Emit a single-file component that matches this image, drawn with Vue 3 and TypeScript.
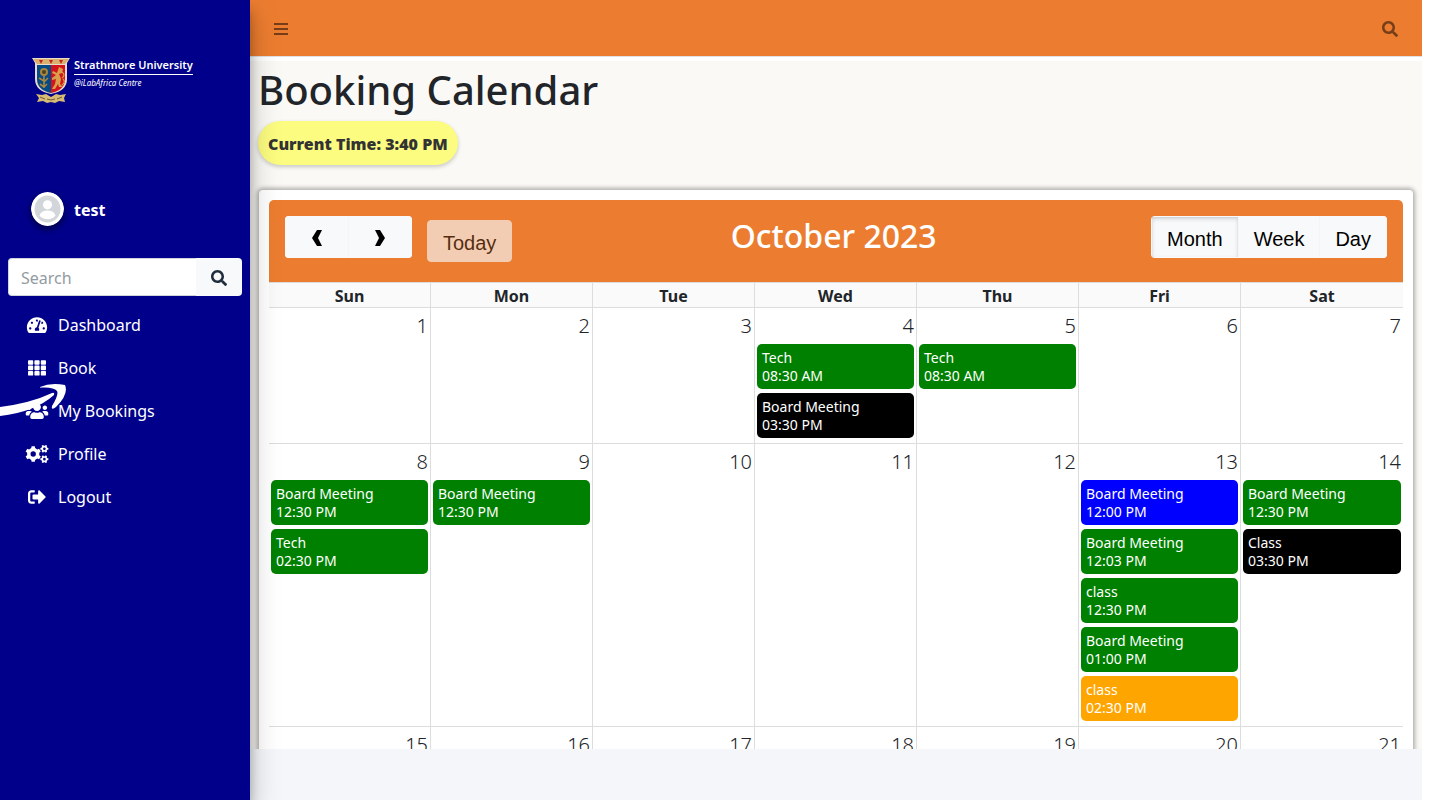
<script setup lang="ts">
import { ref } from 'vue'

interface BookingEvent {
  title: string
  time: string
  color: 'green' | 'black' | 'blue' | 'orange'
}

interface Day {
  date: number
  events: BookingEvent[]
}

interface MenuItem {
  label: string
  viewBox: string
  path: string
}

function gear(cx: number, cy: number, outer: number, inner: number, hole: number, teeth: number, turn: number): string {
  const step = (Math.PI * 2) / teeth
  const points: string[] = []
  for (let i = 0; i < teeth; i++) {
    const mid = i * step + turn
    const corners: [number, number][] = [
      [-0.3, inner],
      [-0.2, outer],
      [0.2, outer],
      [0.3, inner],
    ]
    for (const [offset, radius] of corners) {
      const angle = mid + offset * step
      points.push(`${(cx + Math.cos(angle) * radius).toFixed(1)} ${(cy + Math.sin(angle) * radius).toFixed(1)}`)
    }
  }
  return `M${points.join('L')}ZM${cx - hole} ${cy}a${hole} ${hole} 0 1 0 ${hole * 2} 0a${hole} ${hole} 0 1 0 ${-hole * 2} 0Z`
}

function gridPath(): string {
  let d = ''
  for (const y of [32, 187, 342]) {
    for (const x of [0, 182, 364]) {
      d += `M${x + 24} ${y}h100q24 0 24 24v82q0 24-24 24h-100q-24 0-24-24v-82q0-24 24-24z`
    }
  }
  return d
}

const searchPath =
  'M505 442.7L405.3 343c-4.5-4.5-10.6-7-17-7H372c27.6-35.3 44-79.7 44-128C416 93.1 322.9 0 208 0S0 93.1 0 208s93.1 208 208 208c48.3 0 92.7-16.4 128-44v16.3c0 6.4 2.5 12.5 7 17l99.7 99.7c9.4 9.4 24.6 9.4 33.9 0l28.3-28.3c9.4-9.4 9.4-24.6.1-34zM208 336c-70.7 0-128-57.2-128-128 0-70.7 57.2-128 128-128 70.7 0 128 57.2 128 128 0 70.7-57.2 128-128 128z'

const menu: MenuItem[] = [
  {
    label: 'Dashboard',
    viewBox: '0 0 576 512',
    path: 'M288 32C128.94 32 0 160.94 0 320c0 52.8 14.25 102.26 39.06 144.8 5.61 9.62 16.3 15.2 27.44 15.2h443c11.14 0 21.83-5.58 27.44-15.2C561.75 422.26 576 372.8 576 320c0-159.06-128.94-288-288-288zm0 64c14.71 0 26.58 10.13 30.32 23.65-1.11 2.26-2.64 4.23-3.45 6.67l-9.22 27.67c-5.13 3.49-10.97 6.01-17.64 6.01-17.67 0-32-14.33-32-32S270.33 96 288 96zM96 384c-17.67 0-32-14.33-32-32s14.33-32 32-32 32 14.33 32 32-14.33 32-32 32zm48-160c-17.67 0-32-14.33-32-32s14.33-32 32-32 32 14.33 32 32-14.33 32-32 32zm246.77-72.41l-61.33 184C343.13 347.33 352 364.54 352 384c0 11.72-3.38 22.55-8.88 32H232.88c-5.5-9.45-8.88-20.28-8.88-32 0-33.94 26.5-61.43 59.9-63.59l61.34-184.01c4.17-12.56 17.73-19.45 30.36-15.17 12.57 4.19 19.35 17.79 15.17 30.36zm14.66 57.2l15.52-46.55c3.47-1.29 7.13-2.23 11.05-2.23 17.67 0 32 14.33 32 32s-14.33 32-32 32c-11.38-.01-20.89-6.28-26.57-15.22zM480 384c-17.67 0-32-14.33-32-32s14.33-32 32-32 32 14.33 32 32-14.33 32-32 32z',
  },
  { label: 'Book', viewBox: '0 0 512 512', path: gridPath() },
  {
    label: 'My Bookings',
    viewBox: '0 0 640 512',
    path: 'M96 224c35.3 0 64-28.7 64-64s-28.7-64-64-64-64 28.7-64 64 28.7 64 64 64zm448 0c35.3 0 64-28.7 64-64s-28.7-64-64-64-64 28.7-64 64 28.7 64 64 64zm32 32h-64c-17.6 0-33.5 7.1-45.1 18.6 40.3 22.1 68.9 62 75.1 109.4h66c17.7 0 32-14.3 32-32v-32c0-35.3-28.7-64-64-64zm-256 0c61.9 0 112-50.1 112-112S381.9 32 320 32 208 82.1 208 144s50.1 112 112 112zm76.8 32h-8.3c-20.8 10-43.9 16-68.5 16s-47.6-6-68.5-16h-8.3C179.6 288 128 339.6 128 403.2V432c0 26.5 21.5 48 48 48h288c26.5 0 48-21.5 48-48v-28.8c0-63.6-51.6-115.2-115.2-115.2zm-223.7-13.4C161.5 263.1 145.6 256 128 256H64c-35.3 0-64 28.7-64 64v32c0 17.7 14.3 32 32 32h65.9c6.3-47.4 34.9-87.3 75.2-109.4z',
  },
  {
    label: 'Profile',
    viewBox: '0 0 640 512',
    path:
      gear(212, 256, 226, 176, 76, 6, Math.PI / 6 + Math.PI / 3) +
      gear(530, 108, 116, 88, 38, 6, 0) +
      gear(530, 404, 116, 88, 38, 6, 0),
  },
  {
    label: 'Logout',
    viewBox: '0 0 512 512',
    path: 'M497 273L329 441c-15 15-41 4.5-41-17v-96H152c-13.3 0-24-10.7-24-24v-96c0-13.3 10.7-24 24-24h136V88c0-21.4 25.9-32 41-17l168 168c9.3 9.4 9.3 24.6 0 34zM192 436v-40c0-6.6-5.4-12-12-12H96c-17.7 0-32-14.3-32-32V160c0-17.7 14.3-32 32-32h84c6.6 0 12-5.4 12-12V76c0-6.6-5.4-12-12-12H96c-53 0-96 43-96 96v192c0 53 43 96 96 96h84c6.6 0 12-5.4 12-12z',
  },
]

const dayNames = ['Sun', 'Mon', 'Tue', 'Wed', 'Thu', 'Fri', 'Sat']

const bookings: Record<number, BookingEvent[]> = {
  4: [
    { title: 'Tech', time: '08:30 AM', color: 'green' },
    { title: 'Board Meeting', time: '03:30 PM', color: 'black' },
  ],
  5: [{ title: 'Tech', time: '08:30 AM', color: 'green' }],
  8: [
    { title: 'Board Meeting', time: '12:30 PM', color: 'green' },
    { title: 'Tech', time: '02:30 PM', color: 'green' },
  ],
  9: [{ title: 'Board Meeting', time: '12:30 PM', color: 'green' }],
  13: [
    { title: 'Board Meeting', time: '12:00 PM', color: 'blue' },
    { title: 'Board Meeting', time: '12:03 PM', color: 'green' },
    { title: 'class', time: '12:30 PM', color: 'green' },
    { title: 'Board Meeting', time: '01:00 PM', color: 'green' },
    { title: 'class', time: '02:30 PM', color: 'orange' },
  ],
  14: [
    { title: 'Board Meeting', time: '12:30 PM', color: 'green' },
    { title: 'Class', time: '03:30 PM', color: 'black' },
  ],
}

const weeks: Day[][] = [0, 1, 2].map((week) =>
  dayNames.map((_, i) => {
    const date = week * 7 + i + 1
    return { date, events: bookings[date] ?? [] }
  }),
)

const views = ['Month', 'Week', 'Day'] as const
const activeView = ref<(typeof views)[number]>('Month')
const query = ref('')
</script>

<template>
  <div class="app">
    <aside class="sidebar">
      <a href="#" class="brand">
        <svg class="crest" viewBox="0 0 38 46" aria-hidden="true">
          <path d="M0 0h38l-3 5v16q0 12-16 15Q3 33 3 21V5z" fill="#e8dcc8" />
          <path d="M1 1h36l-4 5H5z" fill="#d8b070" />
          <path d="M7 2h4l-2 4zM17 2h4l-2 4zM27 2h4l-2 4z" fill="#c62020" />
          <path d="M5 7h14v28Q5 32 5 21z" fill="#064a86" />
          <path d="M19 7h14v14q0 11-14 14z" fill="#d3141c" />
          <circle cx="12" cy="14" r="4" fill="#a8863e" />
          <circle cx="12" cy="14" r="2" fill="#4d4020" />
          <path d="M12 18v12M12 23l-5-3M12 24l4-4M12 29l-4-3M12 29l3-3" stroke="#a8863e" stroke-width="1.6" fill="none" />
          <path d="M27 9l4 2-1 4-3 1 2 5-1 5 3 3h-4l-1-3-3 5h-3l3-5 1-5-4 1v-2l4-3-4-2 1-2 4 2z" fill="#d9a04c" />
          <path d="M30 20q4-3 0-6M30 27q4-3 1-6" stroke="#d9a04c" stroke-width="1.2" fill="none" />
          <path d="M4 36l6 1 4-1 5 3 5-3 4 1 6-1-2 4 1 4-6-1-4 2-4-1-4 1-4-2-6 1 2-4z" fill="#d7bb75" />
          <path d="M8 39l5 2M15 41l4 1 4-1M25 41l5-2" stroke="#70592c" stroke-width="1" fill="none" />
        </svg>
        <span class="brand-text">
          <span class="brand-name">Strathmore University</span>
          <span class="brand-sub">@iLabAfrica Centre</span>
        </span>
      </a>

      <a href="#" class="user">
        <svg class="avatar" viewBox="0 0 33 34" aria-hidden="true">
          <ellipse cx="16.5" cy="17" rx="16.5" ry="17" fill="#fff" />
          <ellipse cx="16.5" cy="17" rx="13" ry="13.5" fill="#d2d6da" />
          <circle cx="16.5" cy="12.8" r="4.6" fill="#fff" />
          <path d="M8.500 23.500q1.500-5 8-5t8 5q-3 3.800-8 3.800t-8-3.800z" fill="#fff" />
        </svg>
        <span>test</span>
      </a>

      <form class="search" @submit.prevent>
        <input v-model="query" type="search" placeholder="Search" aria-label="Search" />
        <button type="submit" aria-label="Submit search">
          <svg viewBox="0 0 512 512" width="16" height="16"><path :d="searchPath" fill="currentColor" /></svg>
        </button>
      </form>

      <nav class="menu">
        <a v-for="item in menu" :key="item.label" href="#">
          <svg :viewBox="item.viewBox" aria-hidden="true">
            <path :d="item.path" fill="currentColor" fill-rule="evenodd" />
          </svg>
          <span>{{ item.label }}</span>
        </a>
      </nav>

      <svg class="swoosh" viewBox="0 0 67 34" aria-hidden="true">
        <path d="M0 24Q31 20 52 10Q55 9 54 12Q35 29 0 33z" fill="#fff" />
        <path d="M40 4Q51-1 65 2Q69 11 56 24Q51 28 52 23Q59 12 57 8Q54 4 42 4.500Q40 5 40 4z" fill="#fff" />
      </svg>
    </aside>

    <div class="main">
      <header class="navbar">
        <button type="button" aria-label="Toggle menu">
          <svg viewBox="0 0 14 12" width="14" height="12">
            <path d="M0 0h14v2H0zM0 5h14v2H0zM0 10h14v2H0z" fill="currentColor" />
          </svg>
        </button>
        <button type="button" aria-label="Open search">
          <svg viewBox="0 0 512 512" width="16" height="16"><path :d="searchPath" fill="currentColor" /></svg>
        </button>
      </header>

      <main class="content">
        <h1>Booking Calendar</h1>
        <div class="clock">Current Time: 3:40 PM</div>

        <section class="card">
          <div class="toolbar">
            <div class="toolbar-left">
              <div class="group">
                <button type="button" class="btn arrow" aria-label="Previous month">
                  <svg viewBox="0 0 10 16" width="10" height="16"><path d="M5 0h5L6 8l4 8H5L0 8z" fill="currentColor" /></svg>
                </button>
                <button type="button" class="btn arrow" aria-label="Next month">
                  <svg viewBox="0 0 10 16" width="10" height="16"><path d="M0 0h5l5 8-5 8H0l4-8z" fill="currentColor" /></svg>
                </button>
              </div>
              <button type="button" class="btn today" disabled>Today</button>
            </div>
            <h2>October 2023</h2>
            <div class="group">
              <button
                v-for="view in views"
                :key="view"
                type="button"
                class="btn"
                :class="{ active: view === activeView }"
                @click="activeView = view"
              >
                {{ view }}
              </button>
            </div>
          </div>

          <table class="calendar">
            <thead>
              <tr>
                <th v-for="name in dayNames" :key="name" scope="col">{{ name }}</th>
              </tr>
            </thead>
            <tbody>
              <tr v-for="(week, w) in weeks" :key="w">
                <td v-for="day in week" :key="day.date">
                  <div class="date">{{ day.date }}</div>
                  <div v-for="(event, e) in day.events" :key="e" class="event" :class="event.color">
                    <div>{{ event.title }}</div>
                    <div>{{ event.time }}</div>
                  </div>
                </td>
              </tr>
            </tbody>
          </table>
        </section>
      </main>
      <footer class="footer"></footer>
    </div>
  </div>
</template>

<style>
body {
  background: #fff;
}
</style>

<style scoped>
.app,
.app * {
  box-sizing: border-box;
}

.app {
  display: flex;
  height: 100vh;
  padding-right: 16px;
  overflow: hidden;
  font-family: "Noto Sans", sans-serif;
  font-size: 16px;
  line-height: 24px;
  color: #212529;
}

.app a {
  color: #fff;
  text-decoration: none;
}

.sidebar {
  position: relative;
  z-index: 2;
  flex: 0 0 250px;
  min-width: 0;
  padding: 58px 8px 0;
  background: #00008b;
  box-shadow: 0 14px 28px rgba(0, 0, 0, 0.25), 0 10px 10px rgba(0, 0, 0, 0.22);
}

.brand {
  display: flex;
  gap: 4px;
  padding-left: 24px;
}

.crest {
  width: 38px;
  height: 46px;
}

.brand-text {
  display: flex;
  flex-direction: column;
}

.brand-name {
  height: 17px;
  border-bottom: 1px solid #fff;
  font-size: 11px;
  font-weight: 600;
  line-height: 14px;
  white-space: nowrap;
}

.brand-sub {
  font-size: 8px;
  font-style: italic;
  line-height: 16px;
}

.user {
  display: flex;
  align-items: center;
  gap: 10px;
  margin-top: 88px;
  padding-left: 23px;
  font-weight: 700;
}

.user span {
  padding-top: 2px;
}

.avatar {
  width: 33px;
  height: 34px;
  border-radius: 50%;
  box-shadow: 0 3px 6px rgba(0, 0, 0, 0.3), 0 3px 6px rgba(0, 0, 0, 0.3);
}

.search {
  display: flex;
  height: 38px;
  margin-top: 32px;
}

.search input {
  flex: 1;
  min-width: 0;
  padding: 8px 12px 6px;
  border: 1px solid #ced4da;
  border-right: 0;
  border-radius: 4px 0 0 4px;
  background: #fff;
  font: inherit;
  outline: 0;
}

.search input::placeholder {
  color: #939ba2;
}

.search button {
  display: flex;
  align-items: center;
  justify-content: center;
  width: 46px;
  padding: 2px 0 0;
  border: 0;
  border-radius: 0 4px 4px 0;
  background: #f8f9fa;
  color: #1f2d3d;
}

.menu {
  display: flex;
  flex-direction: column;
  gap: 3px;
  margin-top: 9px;
}

.menu a {
  display: flex;
  align-items: center;
  gap: 8px;
  height: 40px;
  padding-left: 16px;
}

.menu svg {
  width: 26px;
  height: 18px;
}

.swoosh {
  position: absolute;
  top: 383px;
  left: 0;
  width: 67px;
  height: 34px;
}

.main {
  display: flex;
  flex: 1;
  flex-direction: column;
  min-width: 0;
}

.navbar {
  display: flex;
  flex: 0 0 57px;
  align-items: center;
  justify-content: space-between;
  padding: 0 24px;
  border-bottom: 1px solid #dee2e6;
  background: #ec7d30;
}

.navbar button {
  display: flex;
  align-items: center;
  height: 40px;
  padding: 2px 0 0;
  border: 0;
  background: none;
  color: rgba(0, 0, 0, 0.5);
}

.content {
  flex: 1;
  min-height: 0;
  padding: 5px 9px 0 8px;
  border-top: 4px solid #fff;
  background: #faf9f5;
  overflow: hidden;
}

.content h1 {
  margin: 0 0 7px;
  font-size: 40px;
  font-weight: 500;
  line-height: 48px;
}

.clock {
  width: fit-content;
  padding: 11px 10px 9px;
  border-radius: 22px;
  background: #fcfc80;
  box-shadow: 0 2px 4px rgba(0, 0, 0, 0.2);
  color: #333;
  font-weight: 900;
}

.card {
  margin: 25px 0 0 1px;
  padding: 10px;
  border-radius: 4px;
  background: #fff;
  box-shadow: 0 0 4px 2px rgba(0, 0, 0, 0.3);
}

.toolbar {
  display: flex;
  align-items: flex-start;
  justify-content: space-between;
  height: 82px;
  padding: 16px;
  border-radius: 5px 5px 0 0;
  background: #ec7d30;
}

.toolbar h2 {
  margin: 0;
  color: #fff;
  font-size: 32px;
  font-weight: 500;
  line-height: 40px;
}

.toolbar-left {
  display: flex;
  align-items: flex-start;
  gap: 15px;
  padding-right: 4px;
}

.group {
  display: flex;
  border-radius: 4px;
  overflow: hidden;
}

.btn {
  height: 42px;
  padding: 4px 15px 0;
  border: 1px solid #f8f9fa;
  background: #f8f9fa;
  color: #000;
  font-family: "Liberation Sans", Arial, sans-serif;
  font-size: 20px;
  line-height: 30px;
}

.btn + .btn {
  margin-left: -1px;
  border-left-color: #f3f5f7;
}

.btn.arrow {
  display: flex;
  align-items: center;
  justify-content: center;
  width: 64px;
  padding: 2px 0 0;
}

.btn.today {
  margin-top: 4px;
  border-radius: 4px;
  opacity: 0.65;
}

.btn.active {
  border-color: transparent;
  box-shadow: inset 0 2px 4px rgba(0, 0, 0, 0.15), inset 0 1px 2px rgba(0, 0, 0, 0.05);
}

.calendar {
  width: 100%;
  table-layout: fixed;
  border-collapse: separate;
  border-spacing: 0;
}

.calendar th {
  padding: 2px 0 0;
  border: 1px solid #ddd;
  border-left: 0;
  background: #fafafa;
  font-weight: 700;
  line-height: 22px;
}

.calendar td {
  height: 136px;
  padding: 0 2px 5px;
  border-right: 1px solid #ddd;
  border-bottom: 1px solid #ddd;
  vertical-align: top;
}

.calendar th:last-child,
.calendar td:last-child {
  border-right: 0;
}

.date {
  height: 36px;
  font-size: 20px;
  font-weight: 300;
  line-height: 36px;
  text-align: right;
}

.event {
  padding: 5px 5px 4px;
  border-radius: 5px;
  color: #fff;
  font-size: 14px;
  line-height: 18px;
}

.event + .event {
  margin-top: 4px;
}

.green {
  background: #008000;
}

.black {
  background: #000;
}

.blue {
  background: #00f;
}

.orange {
  background: #ffa500;
}

.footer {
  flex: 0 0 51px;
  background: #f4f6f9;
}
</style>
